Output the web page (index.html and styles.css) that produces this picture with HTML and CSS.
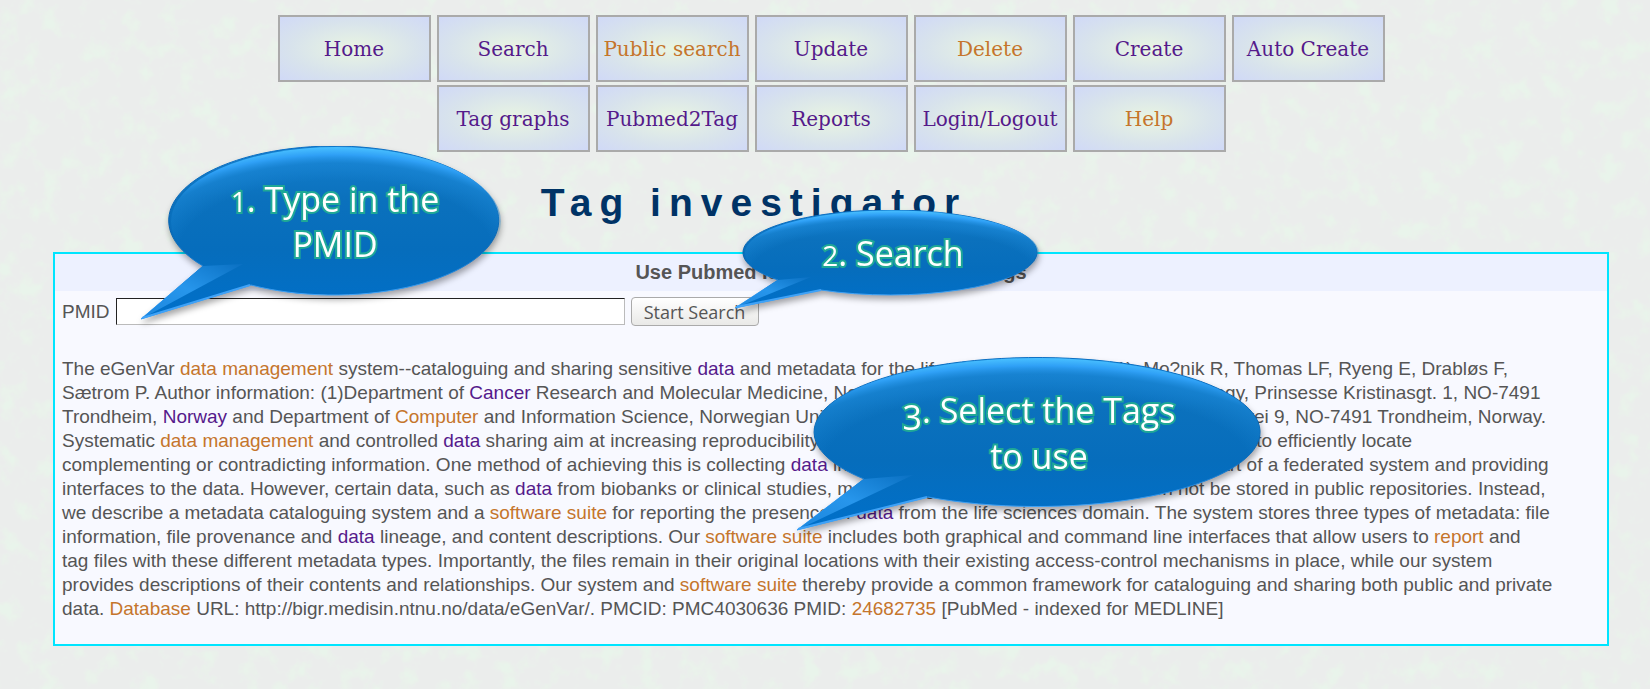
FILE: index.html
```html
<!DOCTYPE html>
<html lang="en">
<head>
<meta charset="utf-8">
<title>Tag investigator</title>
<link rel="stylesheet" href="styles.css">
</head>
<body>
<svg class="paper" aria-hidden="true">
  <filter id="grain" x="0" y="0" width="100%" height="100%" color-interpolation-filters="sRGB">
    <feTurbulence type="fractalNoise" baseFrequency="0.05" numOctaves="4" seed="8"/>
    <feColorMatrix values="0 0 0 0 0.915  0 0 0 0 0.955  0 0 0 0 0.92  0 4 0 0 -2"/>
  </filter>
  <rect width="100%" height="100%" filter="url(#grain)"/>
</svg>
<nav class="menu" aria-label="Main">
  <div class="menu-row">
    <a class="item" href="#home">Home</a>
    <a class="item" href="#search">Search</a>
    <a class="item new" href="#public">Public search</a>
    <a class="item" href="#update">Update</a>
    <a class="item new" href="#delete">Delete</a>
    <a class="item" href="#create">Create</a>
    <a class="item" href="#auto">Auto Create</a>
  </div>
  <div class="menu-row">
    <a class="item" href="#graphs">Tag graphs</a>
    <a class="item" href="#pubmed">Pubmed2Tag</a>
    <a class="item" href="#reports">Reports</a>
    <a class="item" href="#login">Login/Logout</a>
    <a class="item new" href="#help">Help</a>
  </div>
</nav>
<h1 class="title">Tag investigator</h1>
<main class="panel">
  <h2 class="panel-head">Use Pubmed Ids to search matching tags</h2>
  <form class="lookup">
    <label for="pmid">PMID</label>
    <input class="field" id="pmid" type="text">
    <button class="start" type="button">Start Search</button>
  </form>
  <p class="abstract">The eGenVar <a class="new" href="#t1">data management</a> system--cataloguing and sharing sensitive <a href="#t2">data</a> and metadata for the life sciences. Razick S(1), Mo?nik R, Thomas LF, Ryeng E, Drabløs F,<br>
  Sætrom P. Author information: (1)Department of <a href="#t3">Cancer</a> Research and Molecular Medicine, Norwegian University of Science and Technology, Prinsesse Kristinasgt. 1, NO-7491<br>
  Trondheim, <a href="#t4">Norway</a> and Department of <a class="new" href="#t5">Computer</a> and Information Science, Norwegian University of Science and Technology, Sem Sælands vei 9, NO-7491 Trondheim, Norway.<br>
  Systematic <a class="new" href="#t1">data management</a> and controlled <a href="#t2">data</a> sharing aim at increasing reproducibility, reducing redundancy in work, and providing a way to efficiently locate<br>
  complementing or contradicting information. One method of achieving this is collecting <a href="#t2">data</a> in a central repository, or in a location that is part of a federated system and providing<br>
  interfaces to the data. However, certain data, such as <a href="#t2">data</a> from biobanks or clinical studies, may, for legal and ethical reasons, often not be stored in public repositories. Instead,<br>
  we describe a metadata cataloguing system and a <a class="new" href="#t6">software suite</a> for reporting the presence of <a href="#t2">data</a> from the life sciences domain. The system stores three types of metadata: file<br>
  information, file provenance and <a href="#t2">data</a> lineage, and content descriptions. Our <a class="new" href="#t6">software suite</a> includes both graphical and command line interfaces that allow users to <a class="new" href="#t7">report</a> and<br>
  tag files with these different metadata types. Importantly, the files remain in their original locations with their existing access-control mechanisms in place, while our system<br>
  provides descriptions of their contents and relationships. Our system and <a class="new" href="#t6">software suite</a> thereby provide a common framework for cataloguing and sharing both public and private<br>
  data. <a class="new" href="#t8">Database</a> URL: http://bigr.medisin.ntnu.no/data/eGenVar/. PMCID: PMC4030636 PMID: <a class="new" href="#t9">24682735</a> [PubMed - indexed for MEDLINE]</p>
</main>

<svg class="defs" width="0" height="0" aria-hidden="true">
  <linearGradient id="base" x1="0" y1="0" x2="0" y2="1">
    <stop offset="0" stop-color="#1480cf"/>
    <stop offset="0.3" stop-color="#0b71bd"/>
    <stop offset="0.6" stop-color="#066dbc"/>
    <stop offset="1" stop-color="#0070ca"/>
  </linearGradient>
  <radialGradient id="gloss" cx="0.5" cy="0.7" r="0.72">
    <stop offset="0.66" stop-color="#1b87d6" stop-opacity="0"/>
    <stop offset="0.82" stop-color="#1b87d6" stop-opacity="0.6"/>
    <stop offset="0.9" stop-color="#2fa0f6"/>
    <stop offset="0.97" stop-color="#48bfff"/>
  </radialGradient>
  <linearGradient id="rim" x1="0" y1="0" x2="0" y2="1">
    <stop offset="0" stop-color="#0a6fc4"/>
    <stop offset="0.5" stop-color="#0561ae"/>
    <stop offset="0.75" stop-color="#2088e0"/>
    <stop offset="0.85" stop-color="#3fa2f7"/>
  </linearGradient>
  <linearGradient id="tail" x1="1" y1="0" x2="0" y2="1">
    <stop offset="0" stop-color="#0a70c2"/>
    <stop offset="0.5" stop-color="#2796ec"/>
    <stop offset="1" stop-color="#1c86dd"/>
  </linearGradient>
</svg>

<div class="callout first">
  <svg class="bubble" viewBox="0 0 370 180" aria-hidden="true">
    <path d="M66 120A165 74.500 0 1 1 114 139L4 173Z" fill="url(#base)" stroke="url(#rim)"/>
    <ellipse cx="199" cy="75.500" rx="165" ry="74.500" fill="url(#gloss)"/>
    <path d="M66 120L106 118L4 173Z" fill="url(#tail)"/>
    <path d="M5 172L113 139" stroke="#3fa2f7" stroke-width="2"/>
  </svg>
  <p class="note"><span class="low">1</span>. Type in the<br>PMID</p>
</div>
<div class="callout second">
  <svg class="bubble" viewBox="0 0 310 104" aria-hidden="true">
    <path d="M45 70A147 42.500 0 1 1 88 80L2 98Z" fill="url(#base)" stroke="url(#rim)"/>
    <ellipse cx="159" cy="43" rx="147" ry="42.500" fill="url(#gloss)"/>
    <path d="M45 70L78 67L2 98Z" fill="url(#tail)"/>
    <path d="M3 97L88 80" stroke="#3fa2f7" stroke-width="2"/>
  </svg>
  <p class="note"><span class="low">2</span>. Search</p>
</div>
<div class="callout third">
  <svg class="bubble" viewBox="0 0 470 180" aria-hidden="true">
    <path d="M71 122A223 74.500 0 1 1 135 140L4 173Z" fill="url(#base)" stroke="url(#rim)"/>
    <ellipse cx="244" cy="75.500" rx="223" ry="74.500" fill="url(#gloss)"/>
    <path d="M71 122L120 118L4 173Z" fill="url(#tail)"/>
    <path d="M5 172L134 140" stroke="#3fa2f7" stroke-width="2"/>
  </svg>
  <p class="note"><span class="hang">3</span>. Select the Tags<br>to use</p>
</div>
</body>
</html>
```

FILE: styles.css
```css
* { box-sizing: border-box; }

body {
  position: relative;
  min-height: 100vh;
  margin: 0;
  padding: 15px 41px 40px 53px;
  background: #ebedec;
  color: #555;
  font: 20px/24px "Liberation Sans", Arial, sans-serif;
}

a { color: #551a8b; text-decoration: none; }
a.new { color: #c5752c; }

.paper {
  position: absolute;
  inset: 0;
  z-index: -1;
  width: 100%;
  height: 100%;
}

.defs { position: absolute; }

.menu { display: grid; gap: 3px; }
.menu-row { display: flex; justify-content: center; gap: 6px; }

.item {
  display: flex;
  align-items: center;
  justify-content: center;
  width: 153px;
  height: 67px;
  border: 2px solid #aaa;
  background: radial-gradient(#e9f5e2, #d8e3ec 60%, #d0d9f7);
  font-family: "DejaVu Serif", serif;
  white-space: nowrap;
}

.title {
  margin: 28px 154px 27px 0;
  color: #036;
  font-size: 39px;
  line-height: 45px;
  letter-spacing: 8px;
  text-align: center;
}

.panel {
  border: 2px solid #00e5ff;
  background: #f8f9ff;
}

.panel-head {
  margin: 0;
  padding: 7px;
  background: #edf1ff;
  font-size: 20px;
  line-height: 23px;
  text-align: center;
}

.lookup {
  display: flex;
  align-items: center;
  gap: 6px;
  padding: 6px 7px;
}
.lookup label { font-size: 19px; }

.field {
  width: 509px;
  height: 27px;
  border: 1px solid #bbb;
  border-top-color: #222;
  border-left-color: #222;
  background: #fff;
}

.start {
  width: 128px;
  height: 29px;
  padding: 0;
  border: 1px solid #aaa;
  border-radius: 4px;
  background: linear-gradient(#fff, #e9e9e7);
  color: #555;
  font: 18px/24px "Open Sans", sans-serif;
}

.abstract {
  margin: 25px 7px 23px;
  font-size: 19px;
}

.callout {
  position: absolute;
  filter: drop-shadow(1px 4px 3px rgb(0 0 0 / 35%));
}
.first { top: 146px; left: 137px; width: 370px; }
.second { top: 210px; left: 733px; width: 310px; }
.third { top: 357px; left: 793px; width: 470px; }

.bubble { display: block; width: 100%; fill: none; }

.note {
  position: absolute;
  inset: 0;
  margin: 0;
  color: #fff;
  font: 34px/45px "Open Sans", sans-serif;
  text-align: center;
  -webkit-text-stroke: 4px #1fa896;
  paint-order: stroke fill;
}
.first .note { padding: 31px 0 0 26px; }
.second .note { padding: 21px 0 0 10px; }
.third .note { padding: 31px 0 0 22px; }

.low { font-size: 28px; line-height: 1; }
.hang { vertical-align: -7px; line-height: 1; }
```
